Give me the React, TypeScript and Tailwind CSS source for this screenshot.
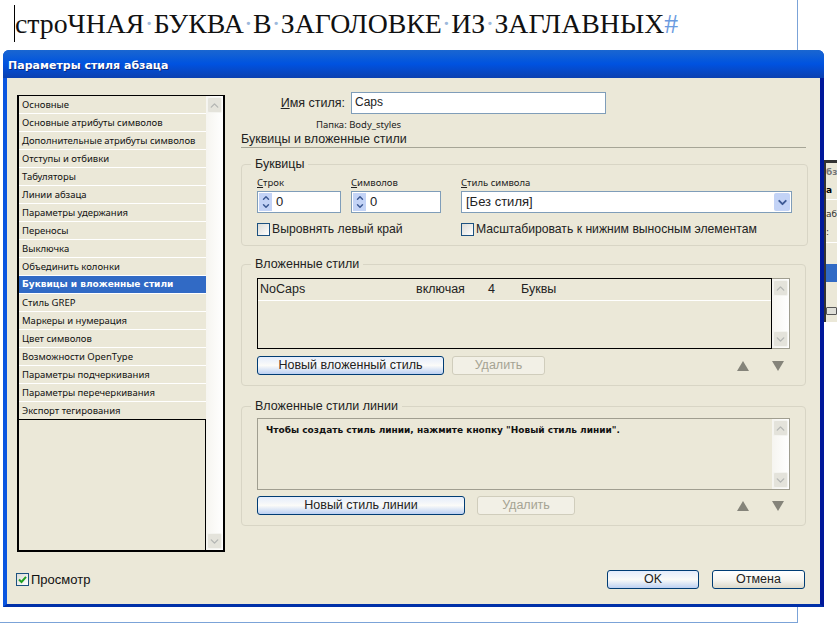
import { ChevronDown, ChevronUp } from 'lucide-react';

const sections = [
  'Основные',
  'Основные атрибуты символов',
  'Дополнительные атрибуты символов',
  'Отступы и отбивки',
  'Табуляторы',
  'Линии абзаца',
  'Параметры удержания',
  'Переносы',
  'Выключка',
  'Объединить колонки',
  'Буквицы и вложенные стили',
  'Стиль GREP',
  'Маркеры и нумерация',
  'Цвет символов',
  'Возможности OpenType',
  'Параметры подчеркивания',
  'Параметры перечеркивания',
  'Экспорт тегирования',
];

function ScrollBtn({ down }: { down?: boolean }) {
  return (
    <div className="w-[15px] h-[16px] mx-px flex items-center justify-center rounded-[2px] bg-[#e4e3db] border border-[#f4f4f0] text-[#b4b6b4]">
      {down ? <ChevronDown size={13} strokeWidth={2.5} /> : <ChevronUp size={13} strokeWidth={2.5} />}
    </div>
  );
}

function Scrollbar() {
  return (
    <div className="w-[17px] shrink-0 flex flex-col justify-between py-px bg-gradient-to-r from-[#f6f5f0] to-white">
      <ScrollBtn />
      <ScrollBtn down />
    </div>
  );
}

function Spin({ width, value }: { width: string; value: string }) {
  return (
    <div className={`${width} h-[22px] flex items-center bg-white border border-[#7f9db9]`}>
      <div className="w-[13px] h-[18px] ml-px flex flex-col items-center justify-center bg-[#c3d3f6] text-[#3d5a94]">
        <ChevronUp size={10} strokeWidth={3.5} className="-mb-px" />
        <ChevronDown size={10} strokeWidth={3.5} className="-mt-px" />
      </div>
      <span className="ml-[4px] text-[13px] text-[#222]">{value}</span>
    </div>
  );
}

function Check({ checked }: { checked?: boolean }) {
  return (
    <span className="w-[13px] h-[13px] shrink-0 flex items-center justify-center border border-[#1c5180] bg-gradient-to-br from-[#dcdcd7] to-white">
      {checked && (
        <svg width="9" height="9" viewBox="0 0 9 9">
          <path d="M1 4.5 L3.5 7 L8 1.8" fill="none" stroke="#21a121" strokeWidth="2" />
        </svg>
      )}
    </span>
  );
}

function Arrows() {
  return (
    <div className="ml-auto flex gap-[23px] pr-[6px]">
      <svg width="12" height="10" viewBox="0 0 12 10">
        <path d="M6 0 L12 10 L0 10 Z" fill="#85847a" />
      </svg>
      <svg width="12" height="10" viewBox="0 0 12 10">
        <path d="M0 0 L12 0 L6 10 Z" fill="#85847a" />
      </svg>
    </div>
  );
}

function XpButton({ label, width, blue }: { label: string; width: string; blue?: boolean }) {
  return (
    <button
      className={`${width} h-[19px] rounded-[3px] border border-[#003c74] text-[12.5px] leading-none text-[#222] bg-gradient-to-b ${
        blue ? 'from-[#e4ecfb] via-[#fbfbf8] to-[#bcd0f2]' : 'from-white via-[#f7f6f1] to-[#dcd8ca]'
      }`}
    >
      {label}
    </button>
  );
}

function DisabledButton({ width }: { width: string }) {
  return (
    <button className={`${width} h-[19px] rounded-[3px] border border-[#d0cdbc] bg-[#f2f0e6] text-[12.5px] leading-none text-[#a5a393]`}>
      Удалить
    </button>
  );
}

function Group({ title, height, children }: { title: string; height: string; children: React.ReactNode }) {
  return (
    <fieldset className={`${height} rounded-[4px] border border-[#d8d5c5] px-[15px]`}>
      <legend className="-ml-[6px] px-[4px] h-[14px] text-[12.5px] leading-[14px] text-[#222]">{title}</legend>
      {children}
    </fieldset>
  );
}

function SideStrip() {
  return (
    <div className="w-[13px] shrink-0 pt-[110px]">
      <div className="h-[162px] border-t-[3px] border-l-2 border-[#333] bg-[#ebe8d8] font-['DejaVu_Sans',sans-serif] text-[9px] text-[#333] overflow-hidden">
        <div className="h-[18px] leading-[18px] font-bold text-[#777] whitespace-nowrap">бз.</div>
        <div className="h-[18px] leading-[18px] font-bold text-black">а</div>
        <div className="h-[24px] pt-[6px] border-t border-white leading-[16px] whitespace-nowrap">абз</div>
        <div className="h-[20px] leading-[18px] border-b border-white">:</div>
        <div className="h-[21px]" />
        <div className="h-[18px] bg-[#316ac5]" />
        <div className="h-[25px]" />
        <div className="w-[11px] h-[8px] rounded-[1px] border border-[#555] bg-[#dfdfd8]" />
      </div>
    </div>
  );
}

const smallLabel = "h-[15px] font-['Noto_Sans',sans-serif] text-[9.5px] leading-[13px] text-[#222]";

export default function App() {
  return (
    <div className="w-[837px] h-[628px] overflow-hidden bg-white font-['Liberation_Sans',sans-serif]">
      {/* Text frame above the dialog */}
      <div className="w-[798px] h-[50px] border-r border-[#7ba3d8] pl-[14px] pt-[5px]">
        <div className="h-[37px] border-l border-black font-['Liberation_Serif',serif] text-[27.8px] leading-[37px] text-[#111] whitespace-nowrap">
          строЧНАЯ<span className="text-[#9db8dc]">·</span>БУКВА<span className="text-[#9db8dc]">·</span>В<span className="text-[#9db8dc]">·</span>ЗАГОЛОВКЕ<span className="text-[#9db8dc]">·</span>ИЗ<span className="text-[#9db8dc]">·</span>ЗАГЛАВНЫХ<span className="text-[#6b9be0]">#</span>
        </div>
      </div>

      <div className="flex">
        <div className="w-[3px] shrink-0" />
        {/* Dialog */}
        <div className="w-[821px] h-[557px] rounded-t-[6px] flex flex-col overflow-hidden bg-[#0047d8]">
          <div className="h-[28px] shrink-0 pl-[5px] pt-[5px] flex items-center bg-gradient-to-b from-[#1a66d0] via-[#0052e0] to-[#0a40b0] text-[11px] font-bold text-white [text-shadow:1px_1px_#0a2a80] font-['DejaVu_Sans',sans-serif]">
            Параметры стиля абзаца
          </div>
          <div className="flex-1 flex border-l-4 border-r-4 border-b-[3px] border-l-[#0a55e0] border-r-[#00189a] border-b-[#0030a8]">
            <div className="flex-1 flex bg-[#ebe8d8] pl-[10px] pt-[17px]">
              {/* Left column */}
              <div className="w-[208px] shrink-0">
                <div className="h-[457px] flex border-2 border-t border-black">
                  <div className="flex-1 flex flex-col font-['Noto_Sans',sans-serif] text-[9.5px] text-[#111]">
                    {sections.map((s, i) => (
                      <div
                        key={s}
                        className={`h-[18px] shrink-0 pl-[3px] leading-[17px] border-b border-white whitespace-nowrap ${
                          i === 10 ? "bg-[#316ac5] text-white font-bold font-['DejaVu_Sans',sans-serif] text-[9px]" : ''
                        }`}
                      >
                        {s}
                      </div>
                    ))}
                    <div className="flex-1 -mt-px border-t border-r border-black" />
                  </div>
                  <Scrollbar />
                </div>
                <label className="mt-[21px] -ml-px flex items-center gap-[2px] text-[13px] leading-none text-[#111]">
                  <Check checked />
                  Просмотр
                </label>
              </div>

              {/* Right column */}
              <div className="ml-[16px] w-[565px]">
                <div className="flex items-center h-[22px] -mt-[3px]">
                  <span className="w-[104px] text-right text-[12.5px] text-[#222]">
                    <span className="underline">И</span>мя стиля:
                  </span>
                  <div className="ml-[6px] w-[255px] h-[22px] pl-[3px] bg-white border border-[#7f9db9] text-[12px] leading-[19px] text-[#222]">
                    Caps
                  </div>
                </div>
                <div className="h-[18px] pl-[75px] pt-[3px] font-['Noto_Sans',sans-serif] text-[9.5px] leading-[15px] text-[#222]">
                  Папка: Body_styles
                </div>
                <div className="h-[16px] border-b border-[#a6a596] text-[12.5px] leading-[14px] text-[#222]">
                  Буквицы и вложенные стили
                </div>

                <div className="mt-[9px] flex flex-col gap-[11px]">
                  <Group title="Буквицы" height="h-[89px]">
                    <div className="flex gap-[10px] pt-[5px]">
                      <div>
                        <div className={smallLabel}>
                          <span className="underline">С</span>трок
                        </div>
                        <Spin width="w-[84px]" value="0" />
                      </div>
                      <div>
                        <div className={smallLabel}>
                          <span className="underline">С</span>имволов
                        </div>
                        <Spin width="w-[90px]" value="0" />
                      </div>
                      <div className="ml-[10px]">
                        <div className={smallLabel}>
                          <span className="underline">С</span>тиль символа
                        </div>
                        <div className="w-[331px] h-[22px] flex items-center bg-white border border-[#7f9db9] pl-[4px] text-[13px] text-[#222]">
                          [Без стиля]
                          <div className="ml-auto w-[16px] h-[18px] mr-px rounded-[2px] flex items-center justify-center bg-[#c3d3f6] text-[#3d5a94]">
                            <ChevronDown size={13} strokeWidth={3.5} />
                          </div>
                        </div>
                      </div>
                    </div>
                    <div className="flex mt-[10px] text-[12.2px] leading-none text-[#222]">
                      <label className="w-[204px] flex items-center gap-[2px]">
                        <Check />
                        Выровнять левый край
                      </label>
                      <label className="flex items-center gap-[2px]">
                        <Check />
                        Масштабировать к нижним выносным элементам
                      </label>
                    </div>
                  </Group>

                  <Group title="Вложенные стили" height="h-[129px]">
                    <div className="mt-[7px] h-[71px] flex border border-[#a09e90]">
                      <div className="flex-1 border border-black -ml-px -mt-px -mb-px">
                        <div className="h-[22px] flex items-center text-[12.5px] text-[#222] border-b border-white">
                          <span className="w-[158px] pl-[2px]">NoCaps</span>
                          <span className="w-[72px]">включая</span>
                          <span className="w-[33px]">4</span>
                          <span>Буквы</span>
                        </div>
                      </div>
                      <Scrollbar />
                    </div>
                    <div className="flex items-center mt-[7px]">
                      <XpButton label="Новый вложенный стиль" width="w-[187px]" blue />
                      <div className="w-[8px]" />
                      <DisabledButton width="w-[93px]" />
                      <Arrows />
                    </div>
                  </Group>

                  <div className="mt-[2px]">
                    <Group title="Вложенные стили линии" height="h-[127px]">
                      <div className="mt-[5px] h-[72px] flex border border-[#a09e90]">
                        <div className="flex-1 pl-[8px] pt-[5px] font-['DejaVu_Sans',sans-serif] text-[9px] font-bold leading-[13px] text-[#111]">
                          Чтобы создать стиль линии, нажмите кнопку "Новый стиль линии".
                        </div>
                        <Scrollbar />
                      </div>
                      <div className="flex items-center mt-[6px]">
                        <XpButton label="Новый стиль линии" width="w-[208px]" blue />
                        <div className="w-[12px]" />
                        <DisabledButton width="w-[98px]" />
                        <Arrows />
                      </div>
                    </Group>
                  </div>
                </div>

                <div className="mt-[44px] flex justify-end gap-[13px] pr-px">
                  <XpButton label="OK" width="w-[92px]" blue />
                  <XpButton label="Отмена" width="w-[93px]" />
                </div>
              </div>
            </div>
          </div>
        </div>
        <SideStrip />
      </div>

      {/* Bottom edge of the text frame */}
      <div className="w-[798px] h-[16px] border-r border-b border-[#7ba3d8]" />
    </div>
  );
}
